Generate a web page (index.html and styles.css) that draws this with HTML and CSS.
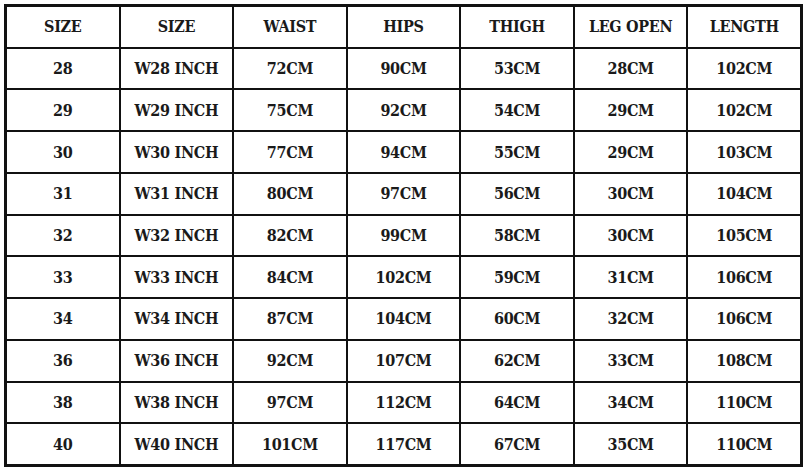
FILE: index.html
```html
<!DOCTYPE html>
<html>
<head>
<meta charset="utf-8">
<link rel="stylesheet" href="styles.css">
</head>
<body>
<div class="chart">
  <div class="cell">SIZE</div><div class="cell">SIZE</div><div class="cell">WAIST</div><div class="cell">HIPS</div><div class="cell">THIGH</div><div class="cell">LEG OPEN</div><div class="cell">LENGTH</div>
  <div class="cell">28</div><div class="cell">W28 INCH</div><div class="cell">72CM</div><div class="cell">90CM</div><div class="cell">53CM</div><div class="cell">28CM</div><div class="cell">102CM</div>
  <div class="cell">29</div><div class="cell">W29 INCH</div><div class="cell">75CM</div><div class="cell">92CM</div><div class="cell">54CM</div><div class="cell">29CM</div><div class="cell">102CM</div>
  <div class="cell">30</div><div class="cell">W30 INCH</div><div class="cell">77CM</div><div class="cell">94CM</div><div class="cell">55CM</div><div class="cell">29CM</div><div class="cell">103CM</div>
  <div class="cell">31</div><div class="cell">W31 INCH</div><div class="cell">80CM</div><div class="cell">97CM</div><div class="cell">56CM</div><div class="cell">30CM</div><div class="cell">104CM</div>
  <div class="cell">32</div><div class="cell">W32 INCH</div><div class="cell">82CM</div><div class="cell">99CM</div><div class="cell">58CM</div><div class="cell">30CM</div><div class="cell">105CM</div>
  <div class="cell">33</div><div class="cell">W33 INCH</div><div class="cell">84CM</div><div class="cell">102CM</div><div class="cell">59CM</div><div class="cell">31CM</div><div class="cell">106CM</div>
  <div class="cell">34</div><div class="cell">W34 INCH</div><div class="cell">87CM</div><div class="cell">104CM</div><div class="cell">60CM</div><div class="cell">32CM</div><div class="cell">106CM</div>
  <div class="cell">36</div><div class="cell">W36 INCH</div><div class="cell">92CM</div><div class="cell">107CM</div><div class="cell">62CM</div><div class="cell">33CM</div><div class="cell">108CM</div>
  <div class="cell">38</div><div class="cell">W38 INCH</div><div class="cell">97CM</div><div class="cell">112CM</div><div class="cell">64CM</div><div class="cell">34CM</div><div class="cell">110CM</div>
  <div class="cell">40</div><div class="cell">W40 INCH</div><div class="cell">101CM</div><div class="cell">117CM</div><div class="cell">67CM</div><div class="cell">35CM</div><div class="cell">110CM</div>
</div>
</body>
</html>
```
FILE: styles.css
```css
html, body {
  margin: 0;
  padding: 0;
  background: #ffffff;
}
body {
  padding: 4px 0 0 4px;
}
.chart {
  box-sizing: border-box;
  width: 799px;
  height: 463px;
  background: #111111;
  padding: 3px;
  display: grid;
  grid-template-columns: repeat(7, 1fr);
  grid-template-rows: repeat(11, 1fr);
  gap: 2px;
}
.cell {
  background: #ffffff;
  display: flex;
  align-items: center;
  justify-content: center;
  font-family: "DejaVu Serif Condensed", "DejaVu Serif", "Liberation Serif", serif;
  font-stretch: condensed;
  font-weight: bold;
  font-size: 16px;
  letter-spacing: -0.3px;
  color: #1a1a1a;
}
```
